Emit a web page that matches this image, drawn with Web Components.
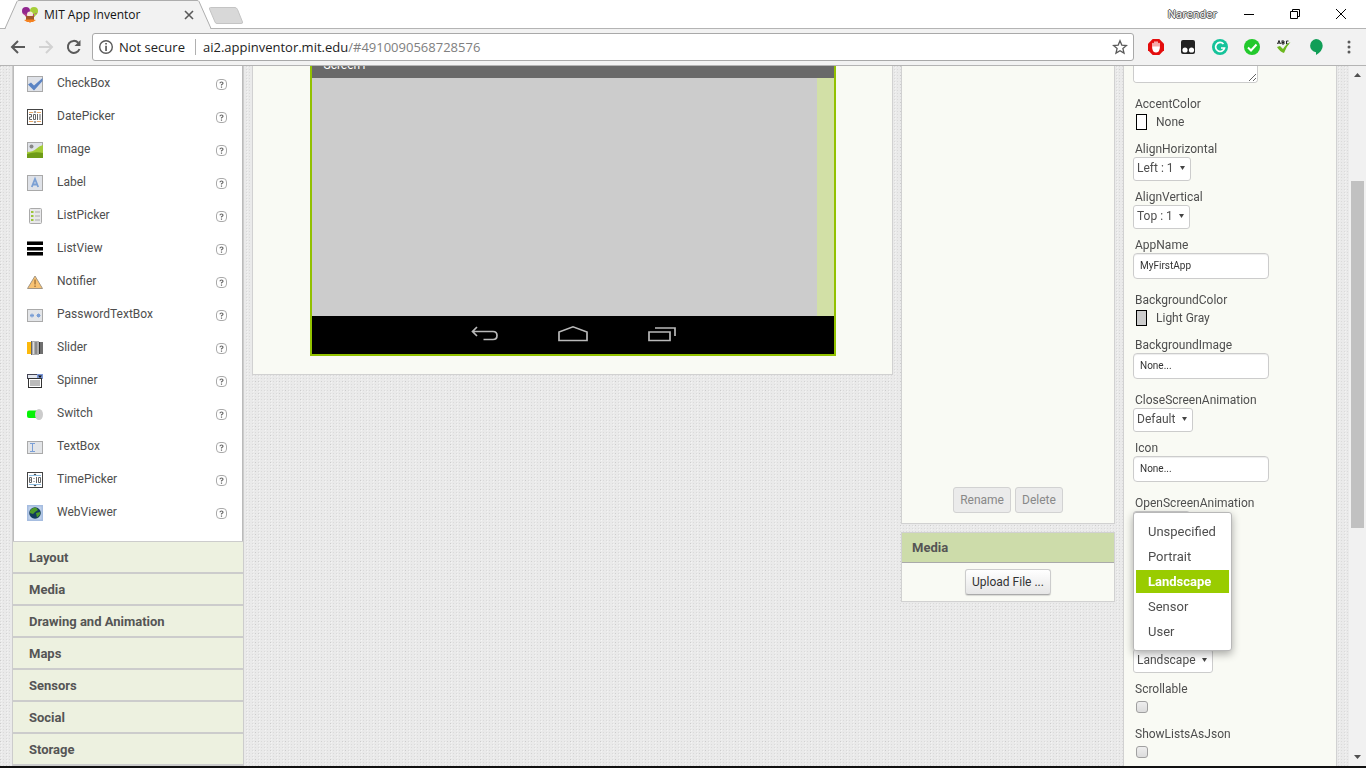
<!DOCTYPE html>
<html lang="en">
<head>
<meta charset="utf-8">
<title>MIT App Inventor</title>
<style>
html, body { margin: 0; height: 100%; }
body { font-family: Roboto, "Liberation Sans", sans-serif; font-size: 12px; line-height: 16px; color: #4e4e4e; overflow: hidden; }
</style>
</head>
<body>
<browser-window></browser-window>
<script>
const define = (name, html, setup) => customElements.define(name, class extends HTMLElement {
  constructor() {
    super();
    this.attachShadow({ mode: 'open' });
  }
  connectedCallback() {
    if (this.shadowRoot.childNodes.length) return;
    const t = document.createElement('template');
    t.innerHTML = typeof html === 'function' ? html(this) : html;
    this.shadowRoot.append(t.content.cloneNode(true));
    if (setup) setup(this);
  }
});

/* ---------- browser frame ---------- */

define('tab-strip', `
<style>
:host { display: flex; height: 29px; box-sizing: border-box; padding-right: 2px; background: linear-gradient(#b4b4b4, #b4b4b4) 0 28px / 100% 1px no-repeat #fff; font-family: "Open Sans", sans-serif; color: #222; }
.tab { display: grid; width: 210px; height: 29px; margin-left: 4px; }
.tab > * { grid-area: 1 / 1; }
.label { display: flex; align-items: center; padding: 1px 20px 0 18px; }
.label span { flex: 1; margin-left: 6px; font-size: 12px; color: #111; white-space: nowrap; }
button { display: block; border: 0; padding: 0; background: none; line-height: 0; }
.new { margin-left: -6px; align-self: flex-start; padding-top: 7px; }
.user { margin: 0 9px 0 auto; align-self: center; padding-bottom: 2px; font-size: 11px; line-height: 14px; color: #fff; text-shadow: 1px 0 #555, -1px 0 #555, 0 1px #555, 0 -1px #555; }
.win { width: 46px; height: 27px; display: grid; place-items: center; }
</style>
<div class="tab">
  <svg width="210" height="29" fill="#f2f2f2" stroke="#adadad"><path d="M0 28.500H1L13 1.500Q13.500.500 15 .500H193Q194.500.500 195 1.500L207 28.500"/><path d="M2 28.500H206" stroke="#f2f2f2"/></svg>
  <div class="label">
    <svg width="16" height="16"><circle cx="4" cy="4" r="4" fill="#91278f"/><circle cx="12" cy="4" r="4" fill="#a6ce39"/><path d="M1 6l3 4h8l3-4-3 1H4z" fill="#b5408a"/><path d="M12 7h3l-3 3z" fill="#a6ce39"/><circle cx="8" cy="7.500" r="3" fill="#f5e6d8"/><path d="M4 9h8v5H4z" fill="#a0582a"/><path d="M2 13l3-.500h6l3 .500-3 2H9l-1 1-1-1H5z" fill="#f58220"/></svg>
    <span>MIT App Inventor</span>
    <button aria-label="Close tab"><svg width="10" height="10" stroke="#5a5a5a" stroke-width="1.600"><path d="M1 1l8 8M9 1L1 9"/></svg></button>
  </div>
</div>
<button class="new" aria-label="New tab"><svg width="36" height="18"><path d="M2.500.500H27Q28.500.500 29.500 2.500L34.500 15Q35 16.500 33 16.500H9Q7.500 16.500 7 15L1.500 2Q1 .500 2.500.500Z" fill="#d8d8d8" stroke="#c4c4c4"/></svg></button>
<span class="user">Narender</span>
<button class="win" aria-label="Minimize"><svg width="10" height="10" stroke="#000"><path d="M0 5.500h10"/></svg></button>
<button class="win" aria-label="Restore"><svg width="10" height="10" stroke="#000" fill="none"><path d="M.5 2.500h7v7h-7zM2.500 2V.500h7v7H8"/></svg></button>
<button class="win" aria-label="Close"><svg width="10" height="10" stroke="#000"><path d="M0 0l10 10M10 0L0 10"/></svg></button>
`);

define('address-bar', `
<style>
:host { display: flex; align-items: center; height: 37px; box-sizing: border-box; padding: 0 10px; background: #f2f2f2; border-bottom: 1px solid #b4b4b4; font-family: "Open Sans", sans-serif; }
button { border: 0; padding: 0; background: none; display: grid; place-items: center; width: 16px; height: 16px; }
svg { display: block; }
.nav { display: flex; gap: 12px; }
.box { flex: 1; display: flex; align-items: center; height: 28px; box-sizing: border-box; margin: 0 10px; padding: 0 5px; border: 1px solid #a9a9a9; border-radius: 3px; background: #fff; font-size: 13px; color: #222; white-space: nowrap; }
.box button { margin-left: auto; }
.safe { margin: 0 10px 0 5px; }
.sep { width: 1px; height: 16px; background: #b0b0b0; margin-right: 7px; }
.url i { font-style: normal; color: #808080; }
.ext { display: flex; gap: 16px; padding-left: 4px; }
</style>
<div class="nav">
<button aria-label="Back"><svg width="16" height="16" fill="none" stroke="#5a5a5a" stroke-width="2"><path d="M15 8H2M8 2L2 8l6 6"/></svg></button>
<button aria-label="Forward"><svg width="16" height="16" fill="none" stroke="#d2d2d2" stroke-width="2"><path d="M1 8h13M8 2l6 6-6 6"/></svg></button>
<button aria-label="Reload"><svg width="16" height="16" fill="none" stroke="#5a5a5a" stroke-width="2"><path d="M13.500 10A6 6 0 1 1 12.200 3.700"/><path d="M14.500 1v6h-6z" fill="#5a5a5a" stroke="none"/></svg></button>
</div>
<div class="box">
<svg width="16" height="16"><circle cx="8" cy="8" r="6.300" fill="none" stroke="#5a5a5a" stroke-width="1.400"/><path d="M7.200 4h1.700v1.600H7.200zM7.200 6.800h1.700V12H7.200z" fill="#5a5a5a"/></svg>
<span class="safe">Not secure</span><span class="sep"></span>
<span class="url">ai2.appinventor.mit.edu<i>/#4910090568728576</i></span>
<button aria-label="Bookmark"><svg width="16" height="16" fill="none" stroke="#5a5a5a" stroke-width="1.300"><path d="M8 1.800l1.800 4.300 4.700.400-3.600 3 1.100 4.600L8 11.700l-4 2.400 1.100-4.600-3.600-3 4.700-.400z"/></svg></button>
</div>
<div class="ext">
<button aria-label="Ad blocker"><svg width="16" height="16"><path d="M4.700 0h6.600L16 4.700v6.600L11.300 16H4.700L0 11.300V4.700z" fill="#e40d0d"/><path d="M5 9V4.500M7 8V3M9 8V3M11 9V4.500" stroke="#fff" stroke-width="1.300" stroke-linecap="round"/><path d="M4.400 7.500h7.200V10Q11 13.500 8 13.500T4.400 10z" fill="#fff"/></svg></button>
<button aria-label="Side view"><svg width="16" height="16"><rect x="1" y="1" width="14" height="14" rx="2" fill="#222"/><circle cx="5" cy="11" r="2.600" fill="#fff"/><circle cx="11.500" cy="11" r="2.600" fill="#fff"/></svg></button>
<button aria-label="Grammar"><svg width="16" height="16"><circle cx="8" cy="8" r="8" fill="#15c39a"/><path d="M11.500 5A4.500 4.500 0 1 0 12.500 9H9" fill="none" stroke="#fff" stroke-width="1.700"/></svg></button>
<button aria-label="Safe site"><svg width="16" height="16"><circle cx="8" cy="8" r="8" fill="#22c92c"/><path d="M4 8.500l3 3 5.500-6" fill="none" stroke="#fff" stroke-width="2"/></svg></button>
<button aria-label="Spell check"><svg width="16" height="16"><path d="M1.500 5L3 1.500 4.500 5M2 4h2M6 1.500v3.500M6 2h2v1.500H6H8V5H6M12.500 2H10.500v3h2" fill="none" stroke="#222"/><path d="M1 8l3-1 3 3Q10 5 14.500 3 10 8 8 14Q4 13 1 8z" fill="#6cb81e"/></svg></button>
<button aria-label="Hangouts"><svg width="16" height="16"><path d="M8 0a6.700 6.700 0 0 0 0 13.300V16Q14.700 12 14.700 6.700A6.700 6.700 0 0 0 8 0z" fill="#119e57"/></svg></button>
<button aria-label="Menu"><svg width="16" height="16" fill="#5a5a5a"><circle cx="9" cy="3" r="1.500"/><circle cx="9" cy="8" r="1.500"/><circle cx="9" cy="13" r="1.500"/></svg></button>
</div>
`);

define('scroll-rail', `
<style>
:host { display: flex; flex-direction: column; align-items: center; width: 17px; background: #f1f1f1; }
svg { flex: none; margin: 7px 0 6px; display: block; }
svg:last-child { margin: 6px 0 7px; }
.track { flex: 1; display: grid; grid-template-rows: 98fr 346fr 221fr; width: 13px; min-height: 0; }
.thumb { grid-row: 2; background: #c1c1c1; }
</style>
<svg width="7" height="4" fill="#505050"><path d="M0 4L3.500 0 7 4z"/></svg>
<div class="track"><div class="thumb"></div></div>
<svg width="7" height="4" fill="#505050"><path d="M0 0l3.500 4L7 0z"/></svg>
`);

/* ---------- palette ---------- */

const frame = '<rect x=".5" y=".5" width="15" height="15" fill="#dfe2e8" stroke="#a9a9a9"/>';
const icons = {
  CheckBox: frame + '<path d="M1 8.500L4 6.500l3 3L15.500 2v3L7 14.500z" fill="#5b84c4"/>',
  DatePicker: '<rect x=".5" y=".5" width="15" height="15" fill="#fff" stroke="#444"/><path d="M2 3.500h4M10 3.500h4M2 12.500h4M10 12.500h4" stroke="#e8a868"/><path d="M6.500 3.500L8 2l1.500 1.500zM6.500 12.500L8 14l1.500-1.500z" fill="#444"/><path d="M2 5.500h2.500v2.500h-2v2.500h2.500M6.500 5.500h2v5h-2zM10.500 5v6M13 5v6" fill="none" stroke="#666"/>',
  Image: frame + '<circle cx="4.500" cy="4.500" r="2" fill="#888"/><path d="M0 10Q6 10 9 7T16 3V16H0z" fill="#a4cc38"/><path d="M0 12Q8 9 16 11V16H0z" fill="#6f9c18"/>',
  Label: frame + '<path d="M4.800 12L8 4l3.200 8M6 9.500h4" fill="none" stroke="#7ba0d4" stroke-width="1.800"/>',
  ListPicker: '<rect x="2.500" y=".5" width="12" height="15" rx="1" fill="#e8e8ea" stroke="#aaa"/><path d="M4 3h2.500v2H4zM4 7h2.500v2H4zM4 11h2.500v2H4z" fill="#9cc53c"/><path d="M8 4h5M8 8h5M8 12h5" stroke="#aaa"/>',
  ListView: '<path d="M0 1h16v3H0zM0 6h16v3H0zM0 11h16v3H0z"/><path d="M0 .5h16M0 9.500h16M0 14.500h16" stroke="#777"/>',
  Notifier: '<path d="M8 2L15.500 14.500H.5z" fill="#f8c272" stroke="#a39684"/><path d="M7.300 5.500h1.500v5H7.300zM7.300 11.500h1.500V13H7.300z" fill="#a8793e"/>',
  PasswordTextBox: '<rect x=".5" y="2.500" width="15" height="12" fill="#e3e5e8" stroke="#aaa"/><path d="M3 8.500h4M5 6.500v4M3.500 7l3 3M6.500 7l-3 3M9.500 8.500h4M11.500 6.500v4M10 7l3 3M13 7l-3 3" stroke="#7b9fd6"/>',
  Slider: '<path d="M0 2h5v12H0z" fill="#fcb90c"/><path d="M12 2h4v12h-4z" fill="#6f6f6f"/><rect x="5" y="1" width="7" height="14" fill="#aeaeae"/><path d="M4.500 1v14M9 2v12" stroke="#666"/><path d="M6.500 2v12" stroke="#ddd"/><path d="M12.500 2v12" stroke="#333"/>',
  Spinner: '<rect x=".5" y="1.500" width="15" height="4" fill="#e2e6ee" stroke="#445"/><path d="M10 1h6v5h-6z" fill="#7c98d8"/><path d="M11 2.500h4L13 5z" fill="#111"/><rect x="1.500" y="5.500" width="13" height="9" fill="#fff" stroke="#333"/><path d="M3 8h10M3 10h10M3 12h10" stroke="#777"/>',
  Switch: '<rect x="0" y="4.500" width="12" height="7.500" rx="2" fill="#05f205"/><ellipse cx="12" cy="8.500" rx="4" ry="5.500" fill="#ccc"/>',
  TextBox: '<rect x=".5" y="2.500" width="15" height="12" fill="#e3e5e8" stroke="#aaa"/><path d="M3 4.500h5M3 12.500h5M5.500 4.500v8" stroke="#7b9fd6"/>',
  TimePicker: '<rect x=".5" y=".5" width="15" height="15" fill="#fff" stroke="#444"/><path d="M2 3.500h12M2 12.500h12" stroke="#8cbce0"/><path d="M6.500 3L8 1.500 9.500 3zM6.500 13L8 14.500 9.500 13z" fill="#333"/><path d="M2.500 5.500h2v5h-2zM2.500 8h2M7 6v1M7 9v1M9.500 5v6M11.500 5.500h2v5h-2z" fill="none" stroke="#666"/>',
  WebViewer: '<rect width="16" height="16" fill="#a6bde0"/><rect x="1.500" y="1.500" width="13" height="13" fill="#bdd0ea"/><circle cx="8" cy="8" r="5.800" fill="#123a5c"/><path d="M3 6Q5 2 9 2.500L11 5 8 7 6 9 3 8zM9 8l4-1Q14 10 10 12.500z" fill="#4d9b28"/>'
};

define('palette-item', el => `
<style>
:host { display: grid; grid-template-columns: 16px 1fr 11px; column-gap: 14px; align-items: center; height: 33px; padding: 0 16px 0 14px; }
svg { display: block; }
:host > svg, a { margin-top: 1px; }
.name { padding-bottom: 2px; }
a { line-height: 0; }
</style>
<svg width="16" height="16" aria-hidden="true">${icons[el.getAttribute('name')]}</svg>
<span class="name">${el.getAttribute('name')}</span>
<a href="#help" aria-label="Help on ${el.getAttribute('name')}"><svg width="11" height="11" fill="none"><rect x=".5" y=".5" width="10" height="10" rx="3.500" stroke="#aaa"/><path d="M4 4.300Q4 3 5.500 3T7 4.300Q7 5 5.500 5.800V6.500M5.500 7.500v1.200" stroke="#666" stroke-width="1.200"/></svg></a>
`);

define('palette-panel', `
<style>
:host { display: block; border-bottom: 1px solid #ccc; }
.items { box-sizing: border-box; padding: 1px 0 12px; background: #fff; border: solid #ccc; border-width: 0 1px; box-shadow: inset 1px 0 #bbb, inset -1px 0 #bbb; }
button { display: block; width: 100%; height: 32px; box-sizing: border-box; border: 1px solid #ccc; padding: 2px 16px 0; background: #edf1e0; color: #555; font: bold 13px/16px Roboto, sans-serif; text-align: left; }
</style>
<div class="items">${Object.keys(icons).map(n => `<palette-item name="${n}"></palette-item>`).join('')}</div>
${['Layout', 'Media', 'Drawing and Animation', 'Maps', 'Sensors', 'Social', 'Storage'].map(n => `<button>${n}</button>`).join('')}
`);

/* ---------- viewer ---------- */

define('viewer-panel', `
<style>
:host { display: block; box-sizing: border-box; padding-bottom: 18px; background: #f9faf4; border: solid #d1d1d1; border-width: 0 1px 1px; }
.phone { max-width: 522px; margin: 0 auto; border: solid #92c100; border-width: 0 2px 2px; background: #ccc; }
.title { display: flex; align-items: flex-end; height: 12px; padding: 0 12px; overflow: hidden; background: #696969; color: #fff; font-size: 12px; line-height: 20px; }
.title span { padding-bottom: 3px; }
.screen { display: flex; justify-content: flex-end; height: 238px; }
.bar { width: 17px; background: #d2e0a6; }
.keys { display: flex; justify-content: center; align-items: center; gap: 58px; height: 38px; box-sizing: border-box; padding: 0 0 2px 2px; background: #000; }
button { border: 0; padding: 0; background: none; }
svg { display: block; fill: none; stroke: #b9b9b9; stroke-width: 1.700; }
</style>
<div class="phone">
<div class="title"><span>Screen1</span></div>
<div class="screen"><div class="bar"></div></div>
<div class="keys">
<button aria-label="Back"><svg width="28" height="18"><path d="M6 2L1.500 6.500 6 11M2 6.500H22Q26 6.500 26 10.500T22 14.500H12.500"/></svg></button>
<button aria-label="Home"><svg width="32" height="18"><path d="M2 15.500V7L16 1.800 30 7V15.500z"/></svg></button>
<button aria-label="Recent"><svg width="30" height="18"><path d="M2 7h21v8.500h-21zM8 3H28V11"/></svg></button>
</div>
</div>
`);

/* ---------- components and media ---------- */

define('gwt-button', el => `
<style>
:host { display: inline-block; }
button { display: block; height: 26px; box-sizing: border-box; padding: 0 6px; border: 1px solid #ccc; border-bottom-color: #aaa; border-radius: 3px; background: linear-gradient(#fff, #e6e6e6); color: #333; font: 12px/16px Roboto, sans-serif; box-shadow: 0 1px 1px #0002; }
button:disabled { background: #ebebeb; color: #888; border-color: #d2d2d2; box-shadow: none; }
</style><button ${el.hasAttribute('disabled') ? 'disabled' : ''}><slot></slot></button>
`);

define('side-column', `
<style>
:host { display: flex; flex-direction: column; gap: 8px; }
section { box-sizing: border-box; background: #f9faf4; border: 1px solid #d1d1d1; }
.tree { display: flex; align-items: flex-end; justify-content: center; gap: 4px; height: 458px; border-top: 0; padding-bottom: 10px; }
h2 { margin: 0; padding: 7px 10px 6px; border-bottom: 1px solid #aaa; background: #cddcaa; color: #555; font: bold 13px/16px Roboto, sans-serif; }
.upload { display: flex; justify-content: center; padding: 6px 0; }
</style>
<section class="tree"><gwt-button disabled>Rename</gwt-button><gwt-button disabled>Delete</gwt-button></section>
<section><h2>Media</h2><div class="upload"><gwt-button>Upload File ...</gwt-button></div></section>
`);

/* ---------- properties ---------- */

const labelStyle = `:host { display: block; } label, .label { display: block; padding-left: 2px; min-height: 16px; line-height: 16px; }`;

define('color-property', el => `
<style>${labelStyle}
:host { padding-bottom: 9px; }
button { display: flex; align-items: center; gap: 9px; height: 20px; padding: 0 3px; border: 0; background: none; color: inherit; font: inherit; }
i { width: 9px; height: 14px; border: 1px solid #000; background: ${el.getAttribute('color')}; }
</style>
<span class="label" id="l">${el.getAttribute('name')}</span>
<button aria-describedby="l"><i></i>${el.getAttribute('value')}</button>
`);

define('select-property', el => `
<style>${labelStyle}
:host { padding-bottom: 8px; }
.wrap { display: inline-grid; align-items: center; justify-items: end; vertical-align: top; height: 24px; }
.wrap > * { grid-area: 1 / 1; }
select { appearance: none; height: 24px; min-width: 57px; box-sizing: border-box; margin: 0; padding: 0 16px 2px 3px; border: 1px solid #ccc; border-radius: 3px; background: #fff; color: #4e4e4e; font: 12px/16px Roboto, sans-serif; }
svg { margin: 0 6px 2px 0; pointer-events: none; }
</style>
<label for="c">${el.getAttribute('name') || ''}</label>
<span class="wrap"><select id="c" aria-label="${el.getAttribute('name') || 'Orientation'}">${el.getAttribute('value') ? `<option>${el.getAttribute('value')}</option>` : ''}</select><svg width="5" height="4" fill="#444"><path d="M0 0h5L2.500 4z"/></svg></span>
`);

define('text-property', el => `
<style>${labelStyle}
:host { padding-bottom: 13px; }
input { display: block; width: 136px; height: 26px; box-sizing: border-box; margin: 0; padding: 0 6px 1px; border: 1px solid #ccc; border-radius: 4px; background: #fff; color: #333; font: 10px/16px Roboto, sans-serif; box-shadow: inset 0 1px 1px #00000013; }
</style>
<label for="c">${el.getAttribute('name')}</label><input id="c" value="${el.getAttribute('value')}">
`);

define('check-property', el => `
<style>${labelStyle}
:host { padding-bottom: 9px; }
.row { display: flex; align-items: center; height: 20px; padding-left: 3px; }
input { appearance: none; width: 12px; height: 12px; box-sizing: border-box; margin: 0; border: 1px solid #a0a0a0; border-radius: 3px; background: linear-gradient(#eee, #dcdcdc); }
</style>
<label for="c">${el.getAttribute('name')}</label><div class="row"><input id="c" type="checkbox"></div>
`);

define('option-popup', `
<style>
:host { display: block; box-sizing: border-box; width: 99px; padding: 7px 2px; background: #fff; border: 1px solid #b8b8b8; border-radius: 3px; box-shadow: 0 3px 8px #0005; }
div { display: grid; gap: 2px; }
button { height: 23px; padding: 0 12px; border: 0; background: none; color: #4e4e4e; font: 13px/16px Roboto, sans-serif; text-align: left; }
button[aria-selected=true] { background: #9c0; color: #fff; font-weight: bold; }
</style>
<div role="listbox">
<button role="option">Unspecified</button><button role="option">Portrait</button><button role="option" aria-selected="true">Landscape</button><button role="option">Sensor</button><button role="option">User</button>
</div>
`);

define('property-panel', `
<style>
:host { display: block; box-sizing: border-box; padding: 0 9px; background: #f9faf4; border: solid #d1d1d1; border-width: 0 1px; }
.about { display: block; width: 125px; height: 17px; min-height: 0; box-sizing: border-box; margin-bottom: 13px; border: 1px solid #ccc; border-top: 0; border-radius: 0 0 4px 4px; background: #fff; resize: both; }
.orient { position: relative; margin-top: 90px; }
option-popup { position: absolute; left: 0; bottom: calc(100% - 18px); }
</style>
<textarea class="about" aria-label="AboutScreen"></textarea>
<color-property name="AccentColor" value="None" color="#fff"></color-property>
<select-property name="AlignHorizontal" value="Left : 1"></select-property>
<select-property name="AlignVertical" value="Top : 1"></select-property>
<text-property name="AppName" value="MyFirstApp"></text-property>
<color-property name="BackgroundColor" value="Light Gray" color="#ccc"></color-property>
<text-property name="BackgroundImage" value="None..."></text-property>
<select-property name="CloseScreenAnimation" value="Default"></select-property>
<text-property name="Icon" value="None..."></text-property>
<select-property name="OpenScreenAnimation"></select-property>
<div class="orient"><select-property value="Landscape"></select-property><option-popup></option-popup></div>
<check-property name="Scrollable"></check-property>
<check-property name="ShowListsAsJson"></check-property>
`);

/* Woven paper texture: 1px flecks repeated at three scales. */
define('designer-page', `
<style>
:host { display: grid; grid-template-columns: 232px minmax(0, 1fr) 214px 214px; gap: 8px; align-items: start; overflow: hidden; padding: 0 12px;
  background:
    conic-gradient(at 1px 1px, #0000 75%, #cbcbcb 0) 0 0 / 15px 9px,
    conic-gradient(at 1px 1px, #0000 75%, #d0d0d0 0) 6px 3px / 21px 12px,
    conic-gradient(at 1px 1px, #0000 75%, #dadada 0) 0 0 / 3px 3px,
    conic-gradient(at 1px 1px, #0000 75%, #f4f4f4 0) 1px 1px / 6px 3px,
    #eaeaea; }
property-panel { min-height: 100%; }
</style>
<palette-panel></palette-panel><viewer-panel></viewer-panel><side-column></side-column><property-panel></property-panel>
`);

define('browser-window', `
<style>
:host { display: flex; flex-direction: column; height: 100vh; box-sizing: border-box; border-bottom: 2px solid #111; background: #fff; }
tab-strip, address-bar { flex: none; }
main { flex: 1; display: flex; min-height: 0; overflow: hidden; }
designer-page { flex: 1; min-width: 0; }
scroll-rail { flex: none; }
</style>
<tab-strip></tab-strip><address-bar></address-bar>
<main><designer-page></designer-page><scroll-rail></scroll-rail></main>
`);
</script>
</body>
</html>
